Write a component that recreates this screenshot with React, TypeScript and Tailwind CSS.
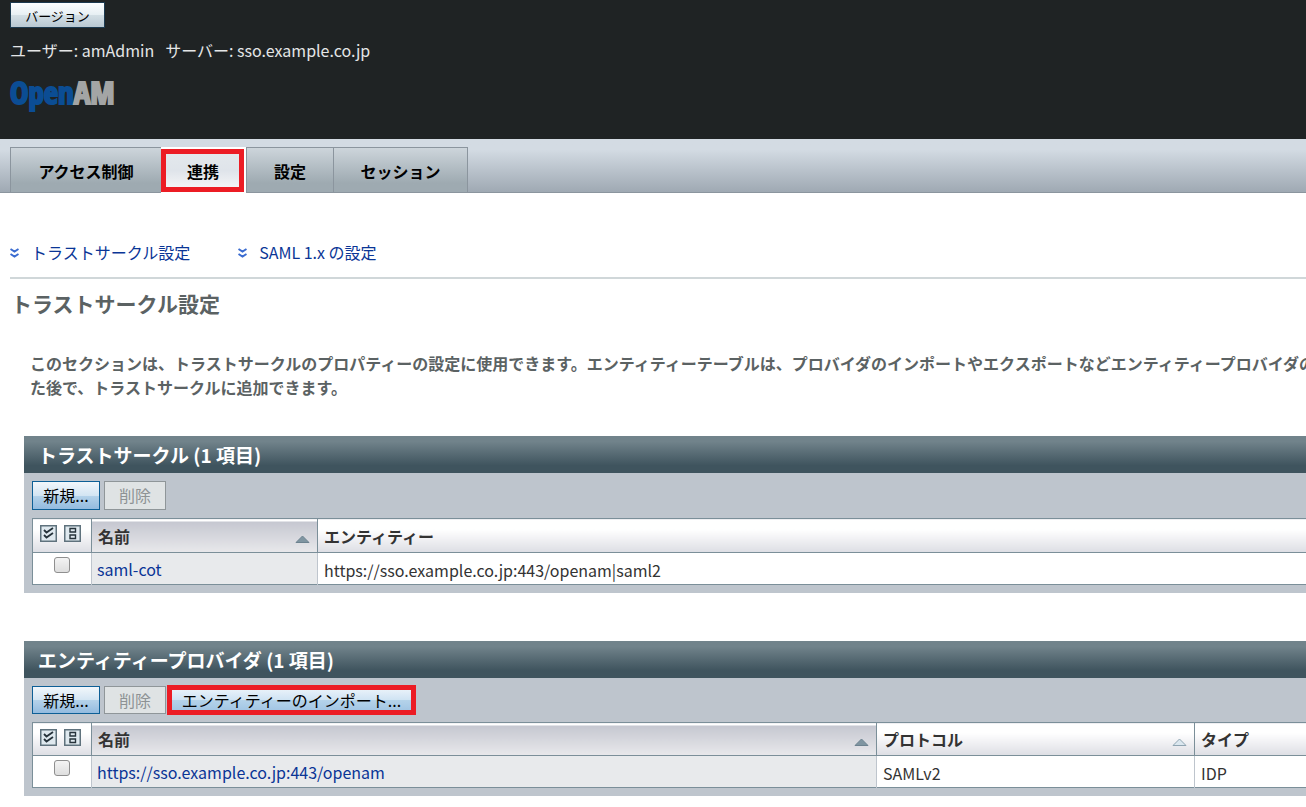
import type { ReactNode } from "react";

const tabs = ["アクセス制御", "連携", "設定", "セッション"];
const tabWidths = ["w-[151px]", "w-[85px]", "w-[87px]", "w-[135px]"];

export default function App() {
  return (
    <div className="min-h-screen overflow-hidden bg-white font-['Noto_Sans_CJK_JP',sans-serif] text-base leading-6 text-[#333]">
      <header className="h-[139px] bg-[#1f2324] px-[10px] pt-[2px]">
        <button
          type="button"
          className="block h-[26px] w-[95px] border border-[#1c3a50] bg-[linear-gradient(#fdfeff,#e6eff3_50%,#d3dfe5_50%,#b9c8d2)] pt-px text-[13px] leading-6 text-black"
        >
          バージョン
        </button>
        <p className="mt-[10px] flex gap-[11px] whitespace-nowrap text-[#e4e6e7]">
          <span>ユーザー: amAdmin</span>
          <span>サーバー: sso.example.co.jp</span>
        </p>
        <Logo />
      </header>

      <nav className="h-[54px] border-b border-[#8b959e] bg-linear-to-b from-[#d3dbe3] from-20% to-[#9fa9b3] px-[10px] pt-2">
        <ul className="flex">
          {tabs.map((tab, i) => (
            <Tab key={tab} label={tab} width={tabWidths[i]} selected={i === 1} last={i === 3} />
          ))}
        </ul>
      </nav>

      <main>
        <div className="ml-[10px] flex gap-12 border-b-2 border-[#d0d7d9] pt-[47px] pb-[13px] whitespace-nowrap">
          <JumpLink>トラストサークル設定</JumpLink>
          <JumpLink>SAML 1.x の設定</JumpLink>
        </div>

        <h1 className="mt-[6px] ml-[11px] text-[21px] leading-9 font-bold text-[#5b6263]">
          トラストサークル設定
        </h1>

        <p className="mt-[30px] ml-[30px] font-bold whitespace-nowrap text-[#5b6263]">
          このセクションは、トラストサークルのプロパティーの設定に使用できます。エンティティーテーブルは、プロバイダのインポートやエクスポートなどエンティティープロバイダの
          <br />
          た後で、トラストサークルに追加できます。
        </p>

        <Panel title="トラストサークル (1 項目)" className="mt-[37px]">
          <div className="flex gap-1 py-2">
            <PrimaryButton>新規...</PrimaryButton>
            <DisabledButton>削除</DisabledButton>
          </div>
          <table className="w-full table-fixed border-collapse border border-r-0 border-[#7b8f99] bg-white">
            <thead>
              <tr className="h-[34px]">
                <SelectHeader />
                <ColumnHeader width="w-[226px]" sorted>名前</ColumnHeader>
                <ColumnHeader>エンティティー</ColumnHeader>
              </tr>
            </thead>
            <tbody>
              <tr className="h-8">
                <SelectCell label="saml-cot" />
                <LinkCell>saml-cot</LinkCell>
                <TextCell>https://sso.example.co.jp:443/openam|saml2</TextCell>
              </tr>
            </tbody>
          </table>
        </Panel>

        <Panel title="エンティティープロバイダ (1 項目)" className="mt-12">
          <div className="flex h-11 gap-1 py-2">
            <PrimaryButton>新規...</PrimaryButton>
            <DisabledButton>削除</DisabledButton>
            <button
              type="button"
              className="-my-px -ml-[3px] w-[249px] border-5 border-[#ec1c24] bg-[linear-gradient(#e8f1f9,#cfe3f3_50%,#b5d3ea_50%,#a3c6e4)] leading-5 whitespace-nowrap text-black"
            >
              エンティティーのインポート...
            </button>
          </div>
          <table className="w-full table-fixed border-collapse border border-r-0 border-[#7b8f99] bg-white">
            <thead>
              <tr className="h-[33px]">
                <SelectHeader />
                <ColumnHeader width="w-[785px]" sorted>名前</ColumnHeader>
                <ColumnHeader width="w-[318px]" sortable>プロトコル</ColumnHeader>
                <ColumnHeader>タイプ</ColumnHeader>
              </tr>
            </thead>
            <tbody>
              <tr className="h-8">
                <SelectCell label="https://sso.example.co.jp:443/openam" />
                <LinkCell>https://sso.example.co.jp:443/openam</LinkCell>
                <TextCell>SAMLv2</TextCell>
                <TextCell>IDP</TextCell>
              </tr>
            </tbody>
          </table>
        </Panel>
      </main>
    </div>
  );
}

function Logo() {
  return (
    <div className="mt-[10px] font-['Liberation_Sans_Narrow','Open_Sans_Condensed','DejaVu_Sans_Condensed',sans-serif] text-[31px] leading-10 font-black">
      <span className="text-[#0b4d94] [-webkit-text-stroke:2px_#0b4d94]">Open</span>
      <span className="text-[#a3a5a5] [-webkit-text-stroke:2px_#a3a5a5]">AM</span>
    </div>
  );
}

type TabProps = { label: string; width: string; selected: boolean; last: boolean };

function Tab({ label, width, selected, last }: TabProps) {
  if (selected) {
    return (
      <li className={`${width} h-[46px] bg-white pt-[2px]`}>
        <a
          href="#federation"
          aria-current="page"
          className="flex h-[43px] w-[83px] items-center justify-center border-5 border-[#ec1c24] bg-linear-to-b from-[#e3e8ec] via-[#dfe4ea] to-[#f3f4f6] pl-px font-bold whitespace-nowrap text-black"
        >
          {label}
        </a>
      </li>
    );
  }
  return (
    <li className={width}>
      <a
        href="#tab"
        className={`flex h-[45px] items-center justify-center border-t border-l border-[#8b959e] bg-linear-to-b from-[#cdd5db] to-[#9eaab1] to-80% pt-[2px] font-bold whitespace-nowrap text-black ${last ? "border-r" : ""}`}
      >
        {label}
      </a>
    </li>
  );
}

function JumpLink({ children }: { children: ReactNode }) {
  return (
    <a href="#section" className="flex items-center gap-3 text-[#0a3596]">
      <svg viewBox="0 0 9 11" className="mt-[3px] h-[11px] w-[9px]" fill="none" stroke="#3a6bd0" strokeWidth="2" aria-hidden="true">
        <path d="M0.5 1 L4.5 3.5 L8.5 1 M0.5 6 L4.5 8.5 L8.5 6" />
      </svg>
      {children}
    </a>
  );
}

function Panel({ title, className, children }: { title: string; className: string; children: ReactNode }) {
  return (
    <section className={`ml-6 bg-[#bec5cd] pb-2 ${className}`}>
      <h2 className="h-[37px] bg-linear-to-b from-[#71838b] from-15% to-[#3f545e] to-80% pl-[14px] text-[19px] leading-[38px] font-bold whitespace-nowrap text-white">
        {title}
      </h2>
      <div className="pl-2">{children}</div>
    </section>
  );
}

function PrimaryButton({ children }: { children: ReactNode }) {
  return (
    <button
      type="button"
      className="min-h-7 w-[68px] border border-[#0d5f96] bg-[linear-gradient(#f2f7fb,#d3e5f3_50%,#b5d3ea_50%,#93bbdf)] py-px leading-[25px] text-black"
    >
      {children}
    </button>
  );
}

function DisabledButton({ children }: { children: ReactNode }) {
  return (
    <button type="button" disabled className="min-h-7 w-[62px] border border-[#8f9699] bg-[#dfe3e4] py-px leading-[25px] text-[#8d9294]">
      {children}
    </button>
  );
}

function SelectHeader() {
  return (
    <th className="w-[59px] border border-[#7b8f99] bg-linear-to-b from-white from-30% to-[#dddee4] p-0">
      <div className="flex gap-[7px] pb-1 pl-[7px]">
        <button type="button" aria-label="すべて選択">
          <svg viewBox="0 0 17 17" className="block size-[17px]" fill="none" aria-hidden="true">
            <rect x="0.75" y="0.75" width="15.5" height="15.5" fill="#dfe9ef" stroke="#5f727d" strokeWidth="1.5" />
            <path d="M4 5 L6.5 7.5 L13 3 M4 10 L6.5 12.5 L13 8" stroke="#26333b" strokeWidth="1.8" />
          </svg>
        </button>
        <button type="button" aria-label="すべて選択解除">
          <svg viewBox="0 0 17 17" className="block size-[17px]" fill="none" aria-hidden="true">
            <rect x="0.75" y="0.75" width="15.5" height="15.5" fill="#dfe9ef" stroke="#5f727d" strokeWidth="1.5" />
            <path d="M6 3.5 H11.5 V7 H6 Z M6 10 H11.5 V13.5 H6 Z" stroke="#26333b" strokeWidth="1.4" />
          </svg>
        </button>
      </div>
    </th>
  );
}

type ColumnHeaderProps = { children: ReactNode; width?: string; sorted?: boolean; sortable?: boolean };

function ColumnHeader({ children, width = "", sorted, sortable }: ColumnHeaderProps) {
  const background = sorted
    ? "bg-[linear-gradient(#fff_2px,#c5c7d0_2px,#e8e8eb)]"
    : "bg-linear-to-b from-white from-30% to-[#dddee4]";
  return (
    <th className={`${width} ${background} border border-[#7b8f99] py-0 pr-[7px] pl-[6px] text-left font-bold whitespace-nowrap last:border-r-0`}>
      <div className="flex items-center justify-between">
        {children}
        {(sorted || sortable) && (
          <svg viewBox="0 0 15 8" className="mt-[6px] h-2 w-[15px]" aria-hidden="true">
            <path
              d="M1 7.5 L7.5 1 L14 7.5 Z"
              fill={sorted ? "#7f95a1" : "#dbe7ef"}
              stroke={sorted ? "#6c828f" : "#8fa5b2"}
            />
          </svg>
        )}
      </div>
    </th>
  );
}

function SelectCell({ label }: { label: string }) {
  return (
    <td className="border-r border-[#bec5cd] p-0 text-center align-top">
      <input
        type="checkbox"
        aria-label={label}
        className="mx-auto mt-1 block size-4 appearance-none rounded-[3px] border border-[#8f8f8f] bg-linear-to-b from-[#f4f4f4] to-[#dedede]"
      />
    </td>
  );
}

function LinkCell({ children }: { children: ReactNode }) {
  return (
    <td className="border-r border-[#bec5cd] bg-[#e8eaec] py-0 pr-0 pl-[5px]">
      <a href="#detail" className="text-[#0a3596]">
        {children}
      </a>
    </td>
  );
}

function TextCell({ children }: { children: ReactNode }) {
  return <td className="border-r border-[#bec5cd] pt-[3px] pb-0 pl-[6px] whitespace-nowrap last:border-r-0">{children}</td>;
}
